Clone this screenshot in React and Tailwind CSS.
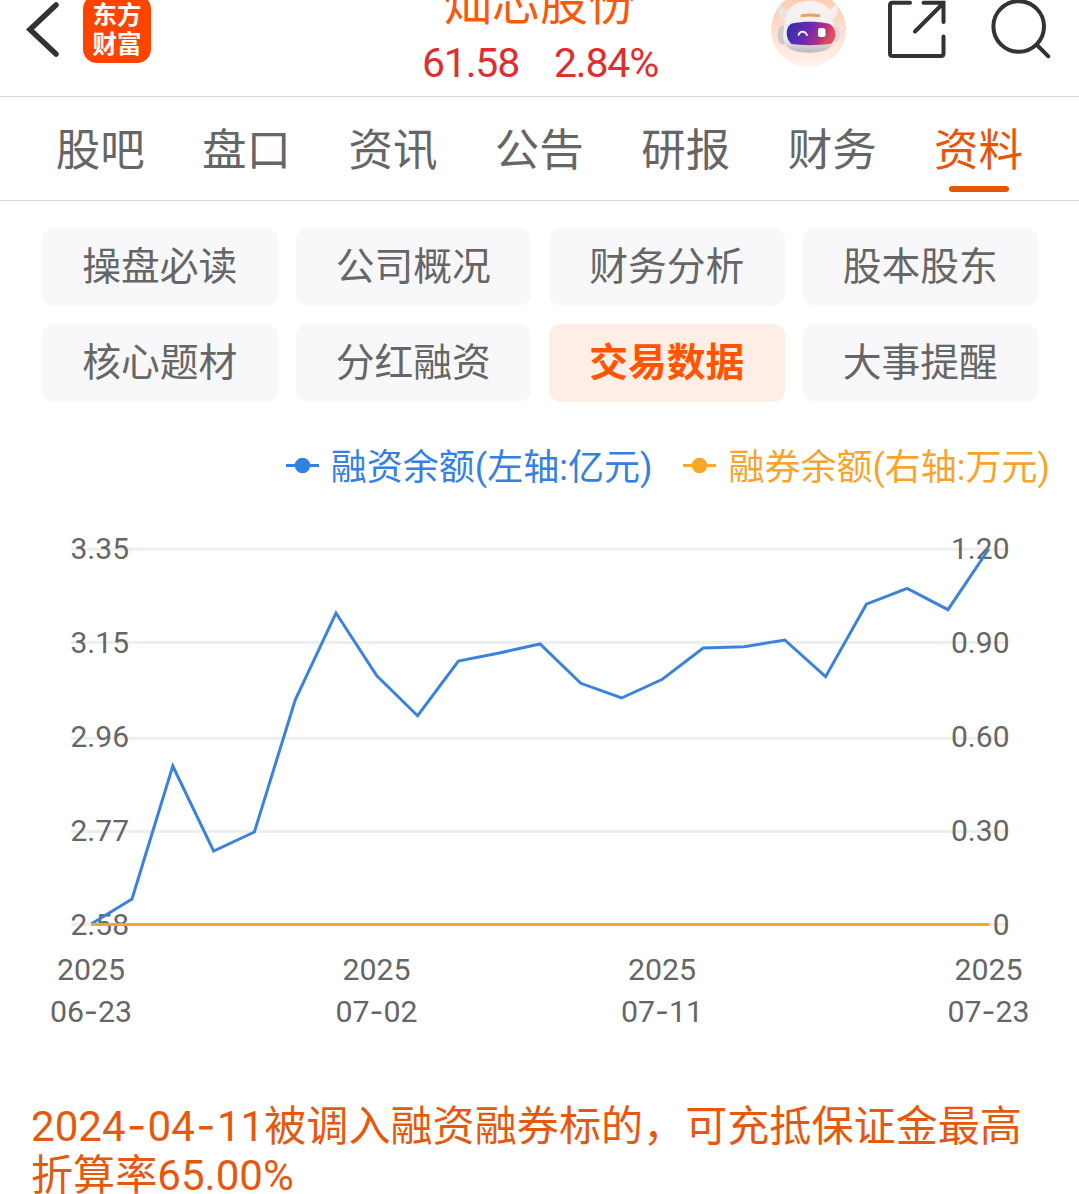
const tabs = ["股吧", "盘口", "资讯", "公告", "研报", "财务", "资料"];

const sections = [
  "操盘必读",
  "公司概况",
  "财务分析",
  "股本股东",
  "核心题材",
  "分红融资",
  "交易数据",
  "大事提醒",
];

// y axis rows: grid line, text baseline, left and right labels
const rows = [
  { y: 119.3, base: 129, left: "3.35", right: "1.20" },
  { y: 212.5, base: 223, left: "3.15", right: "0.90" },
  { y: 308.3, base: 317, left: "2.96", right: "0.60" },
  { y: 401.5, base: 411, left: "2.77", right: "0.30" },
  { y: 494.5, base: 505, left: "2.58", right: "0" },
];

const dates = [
  { x: 91, month: "06", day: "23" },
  { x: 376.5, month: "07", day: "02" },
  { x: 662, month: "07", day: "11" },
  { x: 988.5, month: "07", day: "23" },
];

const balance = [
  494, 469, 336, 421, 402, 270, 183, 245.7, 285.7, 231, 223, 214, 253.3, 268,
  249.3, 218, 216.7, 210, 246.7, 174.2, 158.3, 179.7, 119,
];

const points = balance.map((y, i) => `${91.2 + i * 40.8},${y}`).join(" ");

const BackIcon = () => (
  <svg className="w-[60px] h-[66px]" viewBox="0 0 60 66" fill="none">
    <path
      d="M56 5 L30 29.5 L56 54"
      stroke="#333"
      strokeWidth="5.5"
      strokeLinecap="round"
    />
  </svg>
);

const RobotIcon = () => (
  <svg className="w-[76px] h-[68px]" viewBox="0 0 76 68" fill="none">
    <defs>
      <linearGradient id="halo" x1="0" y1="0" x2="0" y2="1">
        <stop offset="0" stopColor="#ffc8ae" />
        <stop offset="1" stopColor="#fff3ee" />
      </linearGradient>
      <linearGradient id="visor" x1="0" y1="0" x2="1" y2="0.25">
        <stop offset="0" stopColor="#2d2fae" />
        <stop offset="0.5" stopColor="#6a2bb0" />
        <stop offset="0.8" stopColor="#b02f86" />
        <stop offset="1" stopColor="#e0505a" />
      </linearGradient>
      <linearGradient id="shell" x1="0" y1="0" x2="0" y2="1">
        <stop offset="0" stopColor="#f8f4f3" />
        <stop offset="0.75" stopColor="#efeaec" />
        <stop offset="1" stopColor="#bdb5b8" />
      </linearGradient>
    </defs>
    <circle cx="37.5" cy="29.5" r="37.5" fill="url(#halo)" />
    <path d="M9 3 C6 10 8 17 14 21 L24 9 C17 11 11 9 9 3Z" fill="#ebe3e2" />
    <path d="M65 3 C68 10 67 16 61 20 L51 8 C58 11 63 9 65 3Z" fill="#f8efec" />
    <ellipse cx="12" cy="35" rx="5.5" ry="9.5" fill="#cfc9cc" />
    <ellipse cx="64" cy="34" rx="5" ry="8.5" fill="#ded8da" />
    <path
      d="M14 22 C16 7 24 1 38 1 C52 1 60 7 62 22 C67 38 63 47 55 50 C44 53.5 31 53.5 21 50 C13 47 10 38 14 22Z"
      fill="url(#shell)"
    />
    <path
      d="M31 15.7 C35 14.8 42 14.8 48 15.7"
      stroke="#e8a064"
      strokeWidth="3"
      strokeLinecap="round"
    />
    <path
      d="M21 23.5 C32 21 46 21 57 23.5 C66 26 67 40 59 44 C47 45.5 31 45.5 21 44 C14 40 14 26 21 23.5Z"
      fill="url(#visor)"
    />
    <path
      d="M27.5 35 C29 30.5 34 30.5 36 35"
      stroke="#fff"
      strokeWidth="1.8"
      strokeLinecap="round"
    />
    <rect x="47" y="28" width="7.500" height="9" rx="2.500" fill="#fff" />
  </svg>
);

const ShareIcon = () => (
  <svg className="w-[60px] h-[62px]" viewBox="0 0 60 62" fill="none">
    <path
      d="M23 2.7 H5.5 Q3 2.7 3 5.2 V53.5 Q3 56 5.5 56 H54 Q56.5 56 56.5 53.5 V36.5 M36.5 2.7 H56.5 V22 M56 3.5 L28 31.5"
      stroke="#333"
      strokeWidth="4"
      strokeLinecap="round"
    />
  </svg>
);

const SearchIcon = () => (
  <svg className="w-[62px] h-[62px]" viewBox="0 0 62 62" fill="none">
    <circle cx="29.7" cy="26.5" r="25.3" stroke="#333" strokeWidth="4" />
    <path
      d="M48 45 L59.3 56.3"
      stroke="#333"
      strokeWidth="4"
      strokeLinecap="round"
    />
  </svg>
);

const LegendMark = ({ color }) => (
  <svg className="w-[33px] h-[18px] mr-[12px]" viewBox="0 0 33 18">
    <path d="M0 9.5 H33" stroke={color} strokeWidth="3" />
    <circle cx="16.5" cy="9.5" r="7.8" fill={color} />
  </svg>
);

const Dash = () => <span className="mx-[1.3px] font-['Inter']">-</span>;

const App = () => {
  return (
    <div className="w-[1079px] h-[1194px] overflow-hidden bg-white text-[#666] font-['Roboto','Noto_Sans_CJK_SC',sans-serif]">
      {/* Header */}
      <header className="flex items-start h-[97px] border-b border-[#d8d8d8] overflow-hidden">
        <div className="flex items-start w-[360px]">
          <BackIcon />
          <div className="ml-[23px] -mt-[5px] w-[68px] h-[68px] rounded-[14px] bg-[#ff4400] text-white font-bold text-[24.5px] leading-[29px] text-center pt-[6px]">
            <p>东方</p>
            <p>财富</p>
          </div>
        </div>

        <div className="w-[360px] text-center">
          <h1 className="text-[48px] leading-[48px] -mt-[20px] text-[#f75a0c]">
            灿芯股份
          </h1>
          <p className="flex justify-center gap-[35px] mt-[5px] text-[41px] leading-[61px] tracking-[-1.2px] text-[#e02d2d]">
            <span>61.58</span>
            <span>2.84%</span>
          </p>
        </div>

        <div className="flex items-start w-[359px] pl-[51px]">
          <RobotIcon />
          <div className="ml-[40px]">
            <ShareIcon />
          </div>
          <div className="ml-[42px]">
            <SearchIcon />
          </div>
        </div>
      </header>

      {/* Tabs */}
      <nav className="flex h-[104px] pl-[27px] border-b border-[#d8d8d8]">
        {tabs.map((tab) => (
          <div
            key={tab}
            className={
              tab === "资料"
                ? "flex flex-col items-center w-[146.4px] text-[#e8540a]"
                : "flex flex-col items-center w-[146.4px]"
            }
          >
            <span className="mt-[22px] text-[44.5px] leading-[64px]">{tab}</span>
            {tab === "资料" && (
              <span className="mt-[3px] w-[60px] h-[6px] rounded-full bg-[#e8540a]" />
            )}
          </div>
        ))}
      </nav>

      {/* Sections */}
      <div className="grid grid-cols-4 gap-[18px] pt-[27px] pl-[42px] pr-[41px]">
        {sections.map((name) => (
          <div
            key={name}
            className={
              name === "交易数据"
                ? "h-[78px] rounded-xl bg-[#ffeee6] text-[#ff5500] font-bold text-[38.8px] leading-[78px] text-center"
                : "h-[78px] rounded-xl bg-[#f8f8fa] text-[38.8px] leading-[78px] text-center"
            }
          >
            {name}
          </div>
        ))}
      </div>

      {/* Legend */}
      <div className="flex justify-end mt-[28px] pr-[29px] h-[70px] gap-[31px] text-[36px]">
        <div className="flex items-center text-[#3580e0]">
          <LegendMark color="#3580e0" />
          <span className="pt-[5px]">融资余额(左轴:亿元)</span>
        </div>
        <div className="flex items-center text-[#f7a42c]">
          <LegendMark color="#fba62d" />
          <span className="pt-[5px]">融券余额(右轴:万元)</span>
        </div>
      </div>

      {/* Chart */}
      <svg
        className="block w-[1079px] h-[600px] -mt-[70px]"
        viewBox="0 0 1079 600"
        fill="none"
      >
        {rows.map((row) => (
          <g key={row.left}>
            <path d={`M71 ${row.y} H1008`} stroke="#eee" strokeWidth="3" />
            <text x="70.5" y={row.base} fontSize="30" fill="#666">
              {row.left}
            </text>
            <text
              x="1009.5"
              y={row.base}
              fontSize="30"
              fill="#666"
              textAnchor="end"
            >
              {row.right}
            </text>
          </g>
        ))}
        <polyline points={points} stroke="#3b82db" strokeWidth="3" />
        <path d="M91 494.5 H989.500" stroke="#f0a53a" strokeWidth="3" />
        {dates.map((date) => (
          <g key={date.x} fontSize="30.3" fill="#666" textAnchor="middle">
            <text x={date.x} y="550">
              2025
            </text>
            <text x={date.x} y="592">
              {date.month}
              <tspan className="font-['Inter']">-</tspan>
              {date.day}
            </text>
          </g>
        ))}
      </svg>

      {/* Notice */}
      <p className="mt-[71px] pl-[31px] text-[42.1px] leading-[49px] text-[#e5590f] whitespace-nowrap">
        2024
        <Dash />
        04
        <Dash />
        11被调入融资融券标的，可充抵保证金最高
        <br />
        折算率65.00%
      </p>
    </div>
  );
};

export default App;
